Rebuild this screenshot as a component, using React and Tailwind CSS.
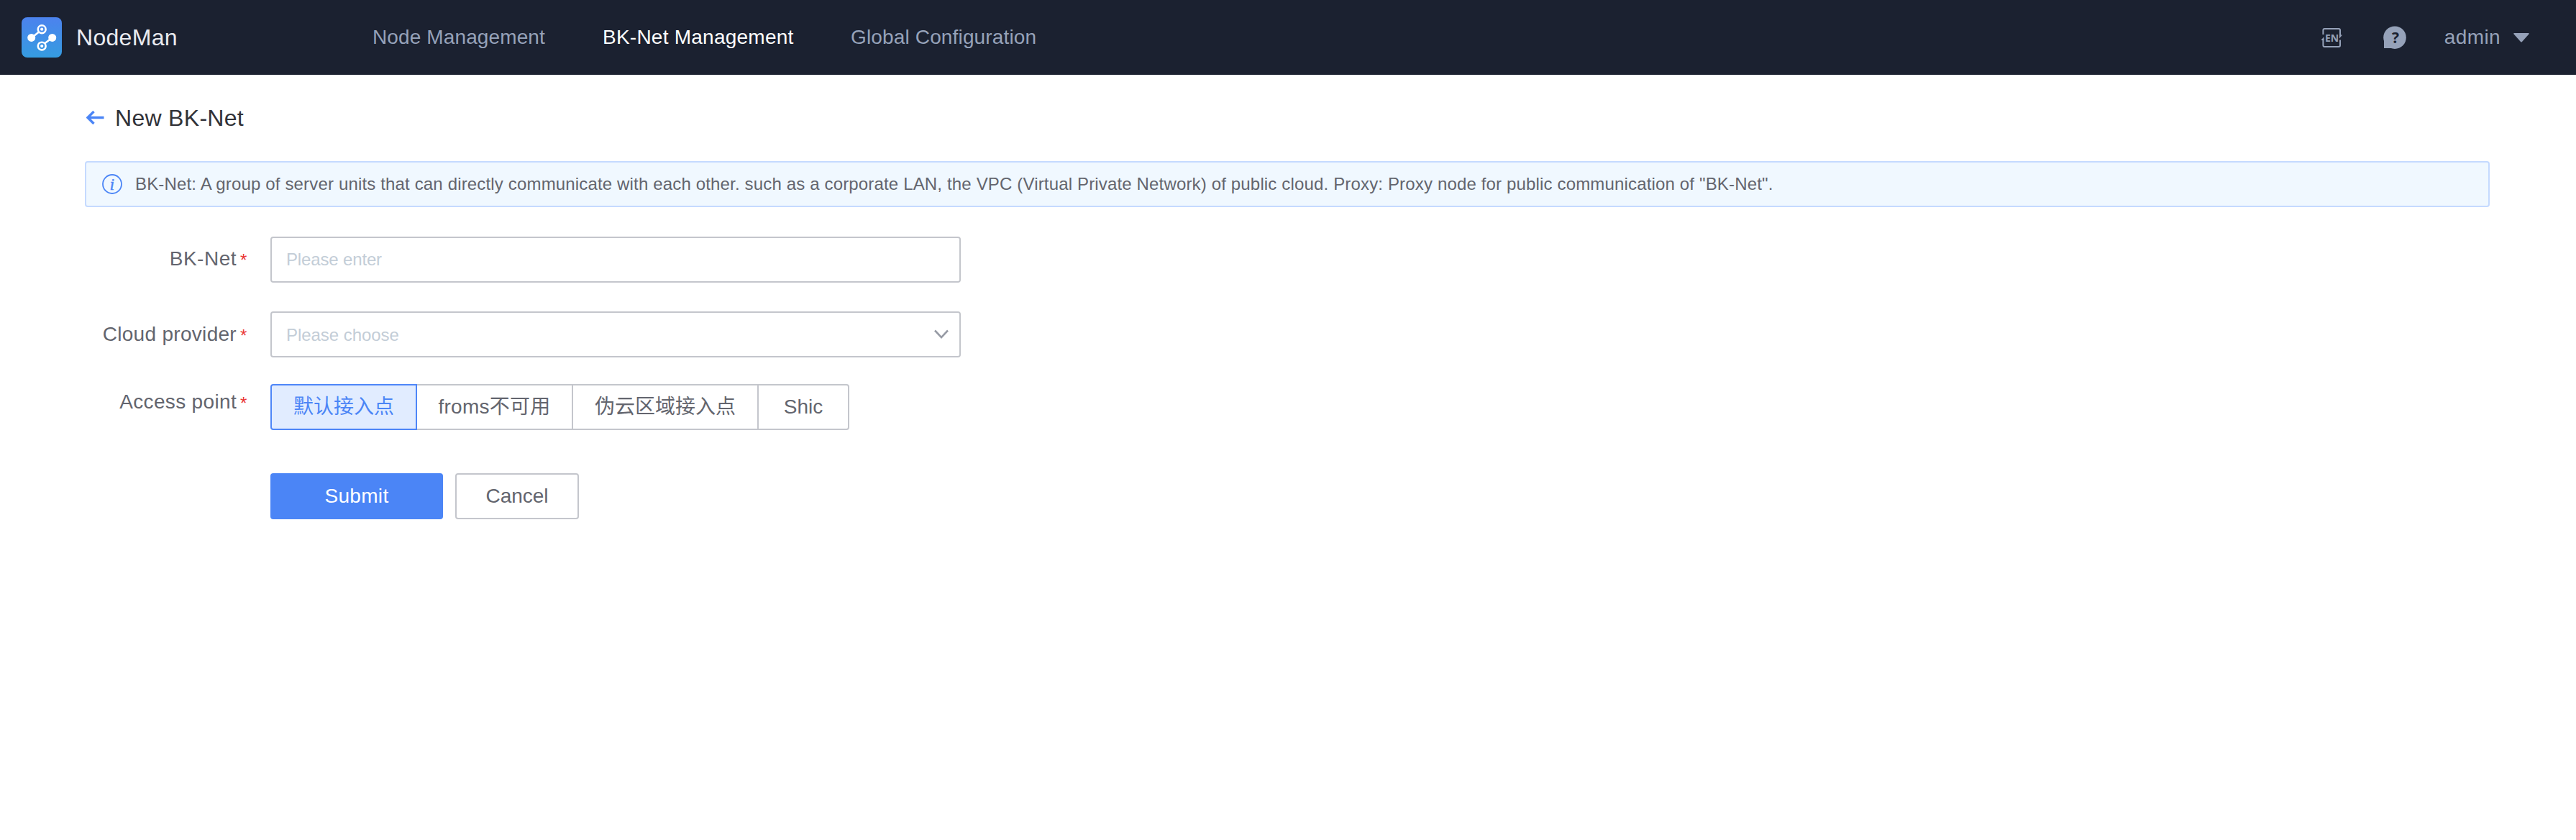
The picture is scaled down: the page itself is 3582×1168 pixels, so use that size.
const navItems = [
  { label: "Node Management", cls: "ml-[270px] w-[240px] tracking-[0.12px] text-[#96a2b9]" },
  { label: "BK-Net Management", cls: "ml-[80px] w-[266px] tracking-[0.24px] text-white" },
  { label: "Global Configuration", cls: "ml-[79px] tracking-[0.15px] text-[#96a2b9]" },
];

const accessPoints = [
  { label: "默认接入点", cls: "w-[204px] rounded-l-[4px] border-2 border-[#4e86f8] bg-[#e1ecff] text-[#4b85f6]" },
  { label: "froms不可用", cls: "w-[217px] border-y-2 border-r-2 border-[#c4c6cc] tracking-[0.25px]" },
  { label: "伪云区域接入点", cls: "w-[258px] border-y-2 border-r-2 border-[#c4c6cc]" },
  { label: "Shic", cls: "w-[126px] rounded-r-[4px] border-y-2 border-r-2 border-[#c4c6cc]" },
];

function Logo() {
  return (
    <svg className="h-14 w-14" viewBox="0 0 56 56">
      <defs>
        <linearGradient id="logo" x1="0" y1="0" x2="0" y2="1">
          <stop offset="0" stopColor="#4c82ee" />
          <stop offset="1" stopColor="#359ce0" />
        </linearGradient>
      </defs>
      <rect width="56" height="56" rx="8" fill="url(#logo)" />
      <g stroke="#fff" fill="none">
        <path d="M14 28.5 24 20.5M42.5 28.5 32 36.5" strokeWidth="2.6" />
        <circle cx="28.2" cy="16.7" r="5.4" strokeWidth="2.6" />
        <circle cx="28.2" cy="40.1" r="5.4" strokeWidth="2.6" />
      </g>
      <g fill="#fff">
        <circle cx="13.7" cy="28.4" r="5.5" />
        <circle cx="42.7" cy="28.4" r="5.5" />
        <circle cx="28.2" cy="16.7" r="2.1" />
        <circle cx="28.2" cy="40.1" r="2.1" />
      </g>
    </svg>
  );
}

function LanguageIcon() {
  return (
    <svg className="h-8 w-8" viewBox="0 0 32 32">
      <g fill="none" stroke="#96a2b9" strokeWidth="2">
        <path d="M4.4 12V6Q4.4 4 6.4 4H26Q28 4 28 6V13.5" />
        <path d="M4.4 18V27Q4.4 29 6.4 29H26Q28 29 28 27V19.5" />
      </g>
      <path d="M27 12.4H31L27 17.6ZM5.4 15.2V20H1.4Z" fill="#96a2b9" />
      <text x="16.6" y="21.9" textAnchor="middle" fill="#96a2b9" fontSize="14" fontWeight="700" fontFamily="Open Sans, sans-serif">EN</text>
    </svg>
  );
}

function HelpIcon() {
  return (
    <svg className="h-8 w-8" viewBox="0 0 32 32">
      <circle cx="16" cy="16.2" r="15.8" fill="#96a2b9" />
      <path d="M1 16H16V31H1Z" fill="#96a2b9" />
      <text x="17" y="23.7" textAnchor="middle" fill="#1b2130" fontSize="21" fontWeight="700" fontFamily="Open Sans, sans-serif">?</text>
    </svg>
  );
}

function Label({ children, cls, starCls }) {
  return (
    <div className={"relative w-[329px] text-right " + cls}>
      {children}
      <span className={"absolute left-[334px] text-[24px] leading-[24px] tracking-normal text-[#ea3636] " + starCls}>*</span>
    </div>
  );
}

export default function App() {
  return (
    <div className="min-h-[1168px] w-full bg-white font-['Liberation_Sans','Noto_Sans_CJK_SC',sans-serif] text-[28px] leading-[32px] text-[#63656e]">
      <header className="flex h-[104px] items-center bg-[#1b2130] pl-[30px] pr-[65px]">
        <Logo />
        <span className="ml-[20px] w-[142px] whitespace-nowrap text-[32px] tracking-[0.3px] text-[#eaebf0]">NodeMan</span>
        <nav className="flex whitespace-nowrap">
          {navItems.map((n) => (
            <a key={n.label} className={n.cls}>{n.label}</a>
          ))}
        </nav>
        <div className="ml-auto flex items-center text-[#96a2b9]">
          <LanguageIcon />
          <div className="ml-[56px]"><HelpIcon /></div>
          <span className="ml-[53px] tracking-[0.4px]">admin</span>
          <svg className="ml-[18px] h-[13px] w-[22px]" viewBox="0 0 22 13">
            <path d="M1 0H21Q22.2 .3 21.4 1.4L12 12Q11 13 10 12L.6 1.4Q-.2 .3 1 0Z" fill="#96a2b9" />
          </svg>
        </div>
      </header>

      <main className="pl-[118px] pr-[120px] pt-[44px]">
        <div className="flex h-8 items-center">
          <svg className="ml-[2px] h-5 w-[25px]" viewBox="0 0 25 20">
            <path d="M24.5 9.5H3M10.5 1 2 9.5l8.5 8.5" fill="none" stroke="#4b85f6" strokeWidth="3.4" />
          </svg>
          <h1 className="ml-[15px] text-[32px] tracking-[0.3px] text-[#313238]">New BK-Net</h1>
        </div>

        <div className="mt-[44px] flex h-16 items-center rounded-[4px] border-2 border-[#c5daff] bg-[#f0f8ff] pl-[22px]">
          <svg className="h-7 w-7" viewBox="0 0 28 28">
            <circle cx="14" cy="14" r="13" fill="none" stroke="#4b85f6" strokeWidth="1.8" />
            <text x="13.8" y="22" textAnchor="middle" fill="#4b85f6" stroke="#4b85f6" strokeWidth="0.4" fontSize="24" fontStyle="italic" fontFamily="Liberation Serif, serif">i</text>
          </svg>
          <p className="ml-[18px] whitespace-nowrap text-[24px] tracking-[0.158px]">
            BK-Net: A group of server units that can directly communicate with each other. such as a corporate LAN, the VPC (Virtual Private Network) of public cloud. Proxy: Proxy node for public communication of "BK-Net".
          </p>
        </div>

        <form className="-ml-[118px] mt-[41px]">
          <div className="flex h-16">
            <Label cls="pt-[15px] tracking-[0.5px]" starCls="top-[21px]">BK-Net</Label>
            <div className="ml-[47px] flex w-[960px] items-center rounded-[4px] border-2 border-[#c4c6cc] pl-[20px] text-[24px] tracking-[-0.15px] text-[#c3cdd7]">Please enter</div>
          </div>
          <div className="mt-10 flex h-16">
            <Label cls="pt-[16px] tracking-[0.3px]" starCls="top-[22px]">Cloud provider</Label>
            <div className="ml-[47px] flex w-[960px] items-center justify-between rounded-[4px] border-2 border-[#c4c6cc] pl-[20px] pr-[15px] text-[24px] tracking-[-0.05px] text-[#c3cdd7]">
              <span className="pt-[2px]">Please choose</span>
              <svg className="h-[14px] w-5" viewBox="0 0 20 14">
                <path d="M1 1.5 10 11.2 19 1.5" fill="none" stroke="#979ba5" strokeWidth="2.6" />
              </svg>
            </div>
          </div>
          <div className="mt-[37px] flex h-16">
            <Label cls="pt-[9px] tracking-[0.33px]" starCls="top-[15px]">Access point</Label>
            <div className="ml-[47px] flex whitespace-nowrap">
              {accessPoints.map((a) => (
                <div key={a.label} className={"flex items-center justify-center " + a.cls}>{a.label}</div>
              ))}
            </div>
          </div>
          <div className="mt-[60px] flex h-16 pl-[376px]">
            <button type="button" className="w-[240px] rounded-[4px] bg-[#4b85f6] tracking-[0.3px] text-white">Submit</button>
            <button type="button" className="ml-[17px] w-[172px] rounded-[4px] border-2 border-[#c4c6cc]">Cancel</button>
          </div>
        </form>
      </main>
    </div>
  );
}
